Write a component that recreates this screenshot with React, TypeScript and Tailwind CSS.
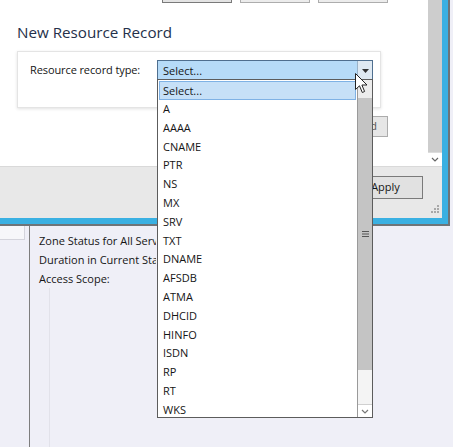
import React from "react";

const items = ["A","AAAA","CNAME","PTR","NS","MX","SRV","TXT","DNAME","AFSDB","ATMA","DHCID","HINFO","ISDN","RP","RT","WKS"];

const font = { fontFamily: '"Open Sans", "Noto Sans", sans-serif' } as React.CSSProperties;

export default function App() {
  return (
    <div className="relative w-[453px] h-[447px] overflow-hidden bg-[#efeff7] text-[#151515]" style={font}>
      {/* Dialog */}
      <div className="flex flex-col w-[450px] h-[226px] border-r-2 border-b-2 border-[#6e7478]">
        <div className="flex flex-col w-[448px] h-[224px] border-r-[6px] border-b-[6px] border-[#3ab0e2] bg-white">
          <div className="flex h-[167px] border-b border-[#d9d9d9]">
            <div className="relative w-[428px] flex flex-col">
              {/* top buttons */}
              <div className="flex h-[3px]">
                <div className="ml-[162px] w-[70px] h-[3px] border-x border-b border-[#7a7a7a] bg-[#e3e3e3]" />
                <div className="ml-[8px] w-[70px] h-[3px] border-x border-b border-[#adadad] bg-[#ececec]" />
                <div className="ml-[8px] w-[70px] h-[3px] border-x border-b border-[#adadad] bg-[#ececec]" />
              </div>
              <div className="ml-[17px] mt-[18px] h-[22px] leading-[22px] text-[15.2px] text-[#24304a]">New Resource Record</div>
              <div className="ml-[17px] mt-[8px] w-[364px] h-[57px] border border-[#e4e4e4] bg-white shadow-[0_1px_3px_rgba(0,0,0,0.12)] flex items-start pt-[8px]">
                <div className="ml-[12px] w-[127px] h-[21px] leading-[19px] text-[11px] tracking-[-0.1px]">Resource record type:</div>
                <div className="w-[216px] h-[21px] border border-[#4f6f8f] bg-[#b6dbf8] flex">
                  <div className="flex-1 pl-[5px] leading-[19px] text-[11px]">Select...</div>
                  <div className="w-[15px] h-[19px] border-l border-[#9bb3c8] bg-[#dfe9f2] flex items-center justify-center">
                    <svg width="7" height="4" viewBox="0 0 7 4"><path d="M0 0h7L3.5 4z" fill="#333" /></svg>
                  </div>
                </div>
              </div>
              <div className="ml-[320px] mt-[8px] w-[68px] h-[21px] border border-[#acacac] bg-[#e6e6e6] flex items-center justify-end pr-[10px] text-[11px] text-[#555]">Add</div>
            </div>
            {/* dialog scrollbar */}
            <div className="w-[14px] h-[166px] flex flex-col bg-[#cdcdcd]">
              <div className="flex-1" />
              <div className="h-[14px] bg-white border-t border-[#dcdcdc] flex items-center justify-center">
                <svg width="8" height="5" viewBox="0 0 8 5"><path d="M1 1l3 3 3-3" stroke="#666" strokeWidth="1.2" fill="none" /></svg>
              </div>
            </div>
          </div>
          {/* footer */}
          <div className="relative h-[51px] bg-[#e8e8e8] flex justify-end pr-[19px] pt-[9px]">
            <div className="w-[75px] h-[23px] border border-[#7a7a7a] bg-[#e1e1e1] flex items-center justify-center text-[11px]">Apply</div>
            <svg className="absolute right-[2px] bottom-[2px]" width="11" height="11" viewBox="0 0 11 11">
              <g fill="#a8a8a8">
                <rect x="8" y="0" width="2" height="2" />
                <rect x="5" y="3" width="2" height="2" /><rect x="8" y="3" width="2" height="2" />
                <rect x="2" y="6" width="2" height="2" /><rect x="5" y="6" width="2" height="2" /><rect x="8" y="6" width="2" height="2" />
              </g>
            </svg>
          </div>
        </div>
      </div>

      {/* lower page */}
      <div className="flex h-[221px]">
        <div className="w-[30px] border-r border-[#7d7d7d] flex flex-col">
          <div className="w-[25px] h-[14px] bg-[#f7f7fa] border-r border-b border-[#d4d4dc]" />
        </div>
        <div className="relative flex-1 pl-[9px] pt-[5px] text-[11px] leading-[19px]">
          <div className="w-[117px] overflow-hidden whitespace-nowrap">Zone Status for All Serv</div>
          <div className="w-[117px] overflow-hidden whitespace-nowrap">Duration in Current Stat</div>
          <div>Access Scope:</div>
          <div className="absolute left-[19px] top-[62px] bottom-0 w-px bg-[#e2e2ea]" />
        </div>
      </div>

      {/* dropdown list */}
      <div className="absolute left-[157px] top-[79px] w-[216px] h-[339px] border border-[#5c5c5c] bg-white flex">
        <div className="flex-1 flex flex-col pt-[1px] px-[1px]">
          <div className="h-[19px] bg-[#c6e0f7] border border-[#7fb2e5] pl-[3px] leading-[17px] text-[11px]">Select...</div>
          {items.map((t) => (
            <div key={t} className="h-[18.8px] leading-[18.8px] pl-[4px] text-[11px]">{t}</div>
          ))}
        </div>
        <div className="w-[15px] h-full border-l border-[#9a9a9a] flex flex-col bg-[#f4f4f4]">
          <div className="h-[18px] bg-[#ececec]" />
          <div className="h-[272px] bg-[#c4c4c4] flex items-center justify-center">
            <svg width="7" height="6" viewBox="0 0 7 6"><g fill="#555"><rect y="0" width="7" height="1" /><rect y="2.5" width="7" height="1" /><rect y="5" width="7" height="1" /></g></svg>
          </div>
          <div className="flex-1" />
          <div className="h-[13px] border-t border-[#d0d0d0] flex items-center justify-center bg-white">
            <svg width="8" height="5" viewBox="0 0 8 5"><path d="M1 1l3 3 3-3" stroke="#777" strokeWidth="1.2" fill="none" /></svg>
          </div>
        </div>
      </div>

      {/* mouse cursor */}
      <svg className="absolute left-[355px] top-[73px]" width="13" height="21" viewBox="0 0 13 21">
        <path d="M0.5 0.5 L0.5 16.5 L4.5 12.8 L7.3 19.5 L9.6 18.5 L6.9 12 L12 12 Z" fill="#ffffff" stroke="#222" strokeWidth="1" strokeLinejoin="round" />
      </svg>
    </div>
  );
}
